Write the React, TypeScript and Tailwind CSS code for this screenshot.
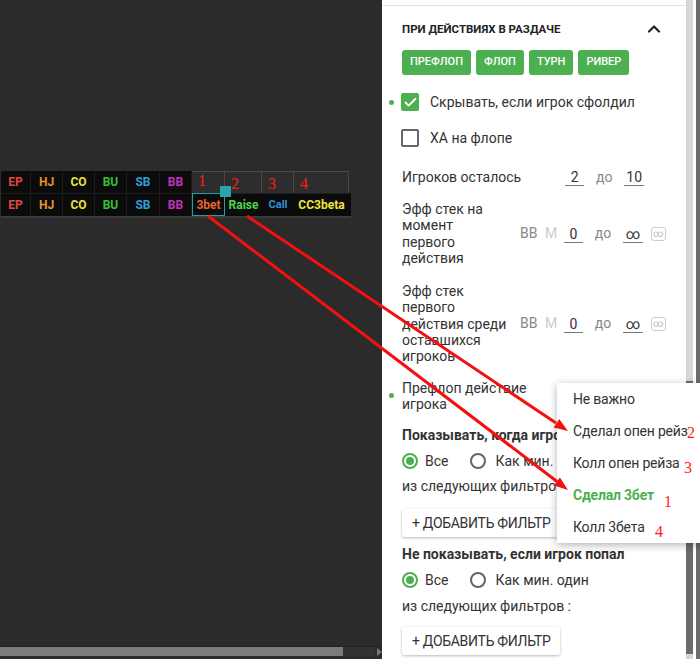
import React from 'react';
import { ChevronUp, Check } from 'lucide-react';

const colW = [30, 32, 32, 32, 33, 32, 33, 37, 32, 55];

const positions: [string, string][] = [
  ['EP', 'text-[#e2473c]'],
  ['HJ', 'text-[#e8922a]'],
  ['CO', 'text-[#ebe233]'],
  ['BU', 'text-[#36c236]'],
  ['SB', 'text-[#2e9fd8]'],
  ['BB', 'text-[#c232c2]'],
];

const actions: [string, string][] = [
  ['3bet', 'text-[#e8632a]'],
  ['Raise', 'text-[#4cd64c]'],
  ['Call', 'text-[#2f8fd8] text-[11px]'],
  ['CC3beta', 'text-[#f0e63a]'],
];

const Cell: React.FC<{ w: number; className?: string; children?: React.ReactNode }> = ({ w, className, children }) => (
  <div style={{ width: w }} className={`flex items-center justify-center shrink-0 ${className ?? ''}`}>
    {children}
  </div>
);

const HandTable = () => (
  <div className="relative ml-[1px] w-[350px] border-b-[2px] border-[#3a3a3a] font-['Roboto',sans-serif] font-bold text-[12px]">
    <div className="flex h-[22px]">
      {positions.map(([p, c], i) => (
        <Cell key={p} w={colW[i]} className={`bg-[#0b0b0b] border-r border-[#1c1c1c] ${c}`}>{p}</Cell>
      ))}
      {['1', '2', '3', '4'].map((n, i) => (
        <Cell
          key={n}
          w={colW[6 + i]}
          className="bg-[#2d2d2d] border-r border-t border-[#484848] !justify-start pl-[6px] font-['Liberation_Serif',serif] font-normal text-[16px] text-[#ff1a1a]"
        >
          <span className={i === 0 ? '-mt-[4px]' : 'mt-[2px]'}>{n}</span>
        </Cell>
      ))}
    </div>
    <div className="flex h-[23px] bg-[#0b0b0b]">
      {positions.map(([p, c], i) => (
        <Cell key={p} w={colW[i]} className={`border-r border-t border-[#1c1c1c] ${c}`}>{p}</Cell>
      ))}
      {actions.map(([a, c], i) => (
        <Cell
          key={a}
          w={colW[6 + i]}
          className={`${i === 0 ? 'border border-[#2a9aa3]' : 'border-t border-[#1c1c1c]'} ${c}`}
        >
          {a}
        </Cell>
      ))}
    </div>
    {/* selection handle */}
    <div className="absolute left-[219px] top-[15px] w-[11px] h-[11px] bg-[#2aa3ad]" />
  </div>
);

const Field: React.FC<{ v: string; w?: string }> = ({ v, w = 'w-[19px]' }) => (
  <span className={`${w} h-[18px] border-b border-[#777] text-center leading-[18px] text-[#333]`}>{v}</span>
);

const RangeGroup: React.FC<{ from: string; to: string; units?: boolean }> = ({ from, to, units }) => (
  <div className="ml-auto flex items-center text-[14px] shrink-0">
    <span className={`w-[25px] ${units ? 'text-[#888]' : 'invisible'}`}>BB</span>
    <span className={`w-[19px] ${units ? 'text-[#ccc]' : 'invisible'}`}>M</span>
    <Field v={from} />
    <span className="w-[40px] text-center text-[#888]">до</span>
    <Field v={to} w="w-[20px]" />
    <span
      className={`ml-[8px] w-[15px] h-[14px] rounded-[3px] border border-[#ccc] text-[10px] leading-[12px] text-center text-[#bbb] ${units ? '' : 'invisible'}`}
    >
      ∞
    </span>
  </div>
);

const Dot = () => <span className="-ml-[13px] mr-[8px] w-[5px] h-[5px] rounded-full bg-[#4caf50] shrink-0" />;

const Radio: React.FC<{ on?: boolean }> = ({ on }) => (
  <span
    className={`w-[16px] h-[16px] rounded-full border-2 flex items-center justify-center ${on ? 'border-[#4caf50]' : 'border-[#666]'}`}
  >
    {on && <span className="w-[8px] h-[8px] rounded-full bg-[#4caf50]" />}
  </span>
);

const AddFilter = ({ className }: { className: string }) => (
  <button className={`${className} h-[28px] px-[10px] bg-white rounded-[3px] shadow-[0_1px_3px_rgba(0,0,0,0.28)] text-[14px] tracking-[-0.3px] text-[#333] uppercase whitespace-nowrap`}>
    + Добавить фильтр
  </button>
);

const RadioRow = () => (
  <div className="h-[28px] flex items-center whitespace-nowrap">
    <Radio on />
    <span className="ml-[7px]">Все</span>
    <span className="ml-[22px]"><Radio /></span>
    <span className="ml-[9px]">Как мин. один</span>
  </div>
);

const Lines: React.FC<{ lines: string[] }> = ({ lines }) => (
  <span className="leading-[16.3px] flex flex-col">
    {lines.map((l) => (
      <span key={l} className="whitespace-nowrap">{l}</span>
    ))}
  </span>
);

const Panel = () => (
  <div className="w-[304px] shrink-0 bg-white font-['Roboto',sans-serif] text-[14px] text-[#333]">
    <div className="h-[6px] border-b border-[#e2e2e2]" />
    <div className="px-[20px]">
      <div className="h-[44px] pt-[15px] flex justify-between">
        <span className="text-[11.5px] font-bold leading-[16px] uppercase text-[#222]">При действиях в раздаче</span>
        <ChevronUp size={20} strokeWidth={2.6} className="-mt-[2px] mr-[2px] text-[#222]" />
      </div>
      <div className="h-[25px] flex gap-[5px]">
        {['Префлоп', 'Флоп', 'Турн', 'Ривер'].map((b) => (
          <span key={b} className="h-[25px] px-[8px] flex items-center rounded-[3px] bg-[#4caf50] text-white text-[11px] font-medium uppercase">
            {b}
          </span>
        ))}
      </div>
      <div className="mt-[9px] h-[36px] flex items-center">
        <Dot />
        <span className="-ml-[1px] w-[18px] h-[18px] rounded-[2px] bg-[#4caf50] flex items-center justify-center">
          <Check size={15} strokeWidth={3} className="text-white" />
        </span>
        <span className="ml-[11px]">Скрывать, если игрок сфолдил</span>
      </div>
      <div className="h-[36px] flex items-center">
        <span className="-ml-[1px] w-[18px] h-[18px] rounded-[2px] border-2 border-[#666]" />
        <span className="ml-[11px]">ХА на флопе</span>
      </div>
      <div className="h-[42px] flex items-center">
        <span className="whitespace-nowrap">Игроков осталось</span>
        <RangeGroup from="2" to="10" />
      </div>
      <div className="mt-[3px] flex items-center">
        <Lines lines={['Эфф стек на', 'момент', 'первого', 'действия']} />
        <RangeGroup from="0" to="∞" units />
      </div>
      <div className="mt-[17px] flex items-center">
        <Lines lines={['Эфф стек', 'первого', 'действия среди', 'оставшихся', 'игроков']} />
        <RangeGroup from="0" to="∞" units />
      </div>
      <div className="mt-[15px] flex items-center">
        <Dot />
        <Lines lines={['Префлоп действие', 'игрока']} />
      </div>
      <div className="mt-[11px] h-[24px] flex items-center font-bold whitespace-nowrap">Показывать, когда игрок попал</div>
      <RadioRow />
      <div className="h-[22px] flex items-center whitespace-nowrap">из следующих фильтров :</div>
      <AddFilter className="mt-[12px]" />
      <div className="mt-[5px] h-[24px] flex items-center font-bold whitespace-nowrap">Не показывать, если игрок попал</div>
      <RadioRow />
      <div className="h-[24px] flex items-center">из следующих фильтров :</div>
      <AddFilter className="mt-[9px]" />
    </div>
  </div>
);

const menu = ['Не важно', 'Сделал опен рейз', 'Колл опен рейза', 'Сделал 3бет', 'Колл 3бета'];

const Dropdown = () => (
  <div className="absolute left-[557px] top-[383px] w-[160px] bg-white shadow-[0_2px_8px_rgba(0,0,0,0.3)] font-['Roboto',sans-serif] text-[14px] tracking-[-0.2px] text-[#333] z-10">
    {menu.map((m, i) => (
      <div key={m} className={`h-[32px] px-[16px] flex items-center whitespace-nowrap ${i === 3 ? 'font-bold text-[#4caf50]' : ''}`}>
        {m}
      </div>
    ))}
  </div>
);

// red annotation numbers and arrows drawn over the panel
const Marks = () => (
  <div className="absolute inset-0 pointer-events-none z-20 font-['Liberation_Serif',serif] text-[16px] text-[#ff1a1a]">
    <span className="absolute left-[687px] top-[421px]">2</span>
    <span className="absolute left-[684px] top-[456px]">3</span>
    <span className="absolute left-[664px] top-[490px]">1</span>
    <span className="absolute left-[655px] top-[520px]">4</span>
    <svg className="absolute inset-0" width={700} height={659}>
      <line x1={247} y1={216} x2={556} y2={423} stroke="#f41010" strokeWidth={3} />
      <polygon points="568,431 553.6,427.4 559.2,419" fill="#f41010" />
      <line x1={208} y1={216} x2={557} y2={481.5} stroke="#f41010" strokeWidth={3} />
      <polygon points="568,490 553.9,485.5 559.9,477.5" fill="#f41010" />
    </svg>
  </div>
);

export default function App() {
  return (
    <div className="relative w-[700px] h-[659px] flex overflow-hidden bg-[#2b2b2b]">
      <div className="w-[382px] shrink-0 flex flex-col bg-[#2b2b2b]">
        <div className="mt-[171px]">
          <HandTable />
        </div>
        <div className="mt-auto mb-[3px] h-[10px] flex border-t border-[#222]">
          <div className="w-[343px] bg-[#7b7b7b]" />
          <div className="w-[32px] bg-[#323232]" />
          <div className="ml-[2px] self-center w-0 h-0 border-y-[4px] border-y-transparent border-l-[5px] border-l-[#777]" />
        </div>
      </div>
      <Panel />
      <div className="w-[7px] shrink-0 flex flex-col bg-[#d6d6d6]">
        <div className="h-[381px]" />
        <div className="flex-1 mb-[5px] bg-[#6b6b6b]" />
      </div>
      <div className="w-[3px] shrink-0 bg-white" />
      <div className="w-[4px] shrink-0 bg-[#6b6b6b]" />
      <Dropdown />
      <Marks />
    </div>
  );
}
